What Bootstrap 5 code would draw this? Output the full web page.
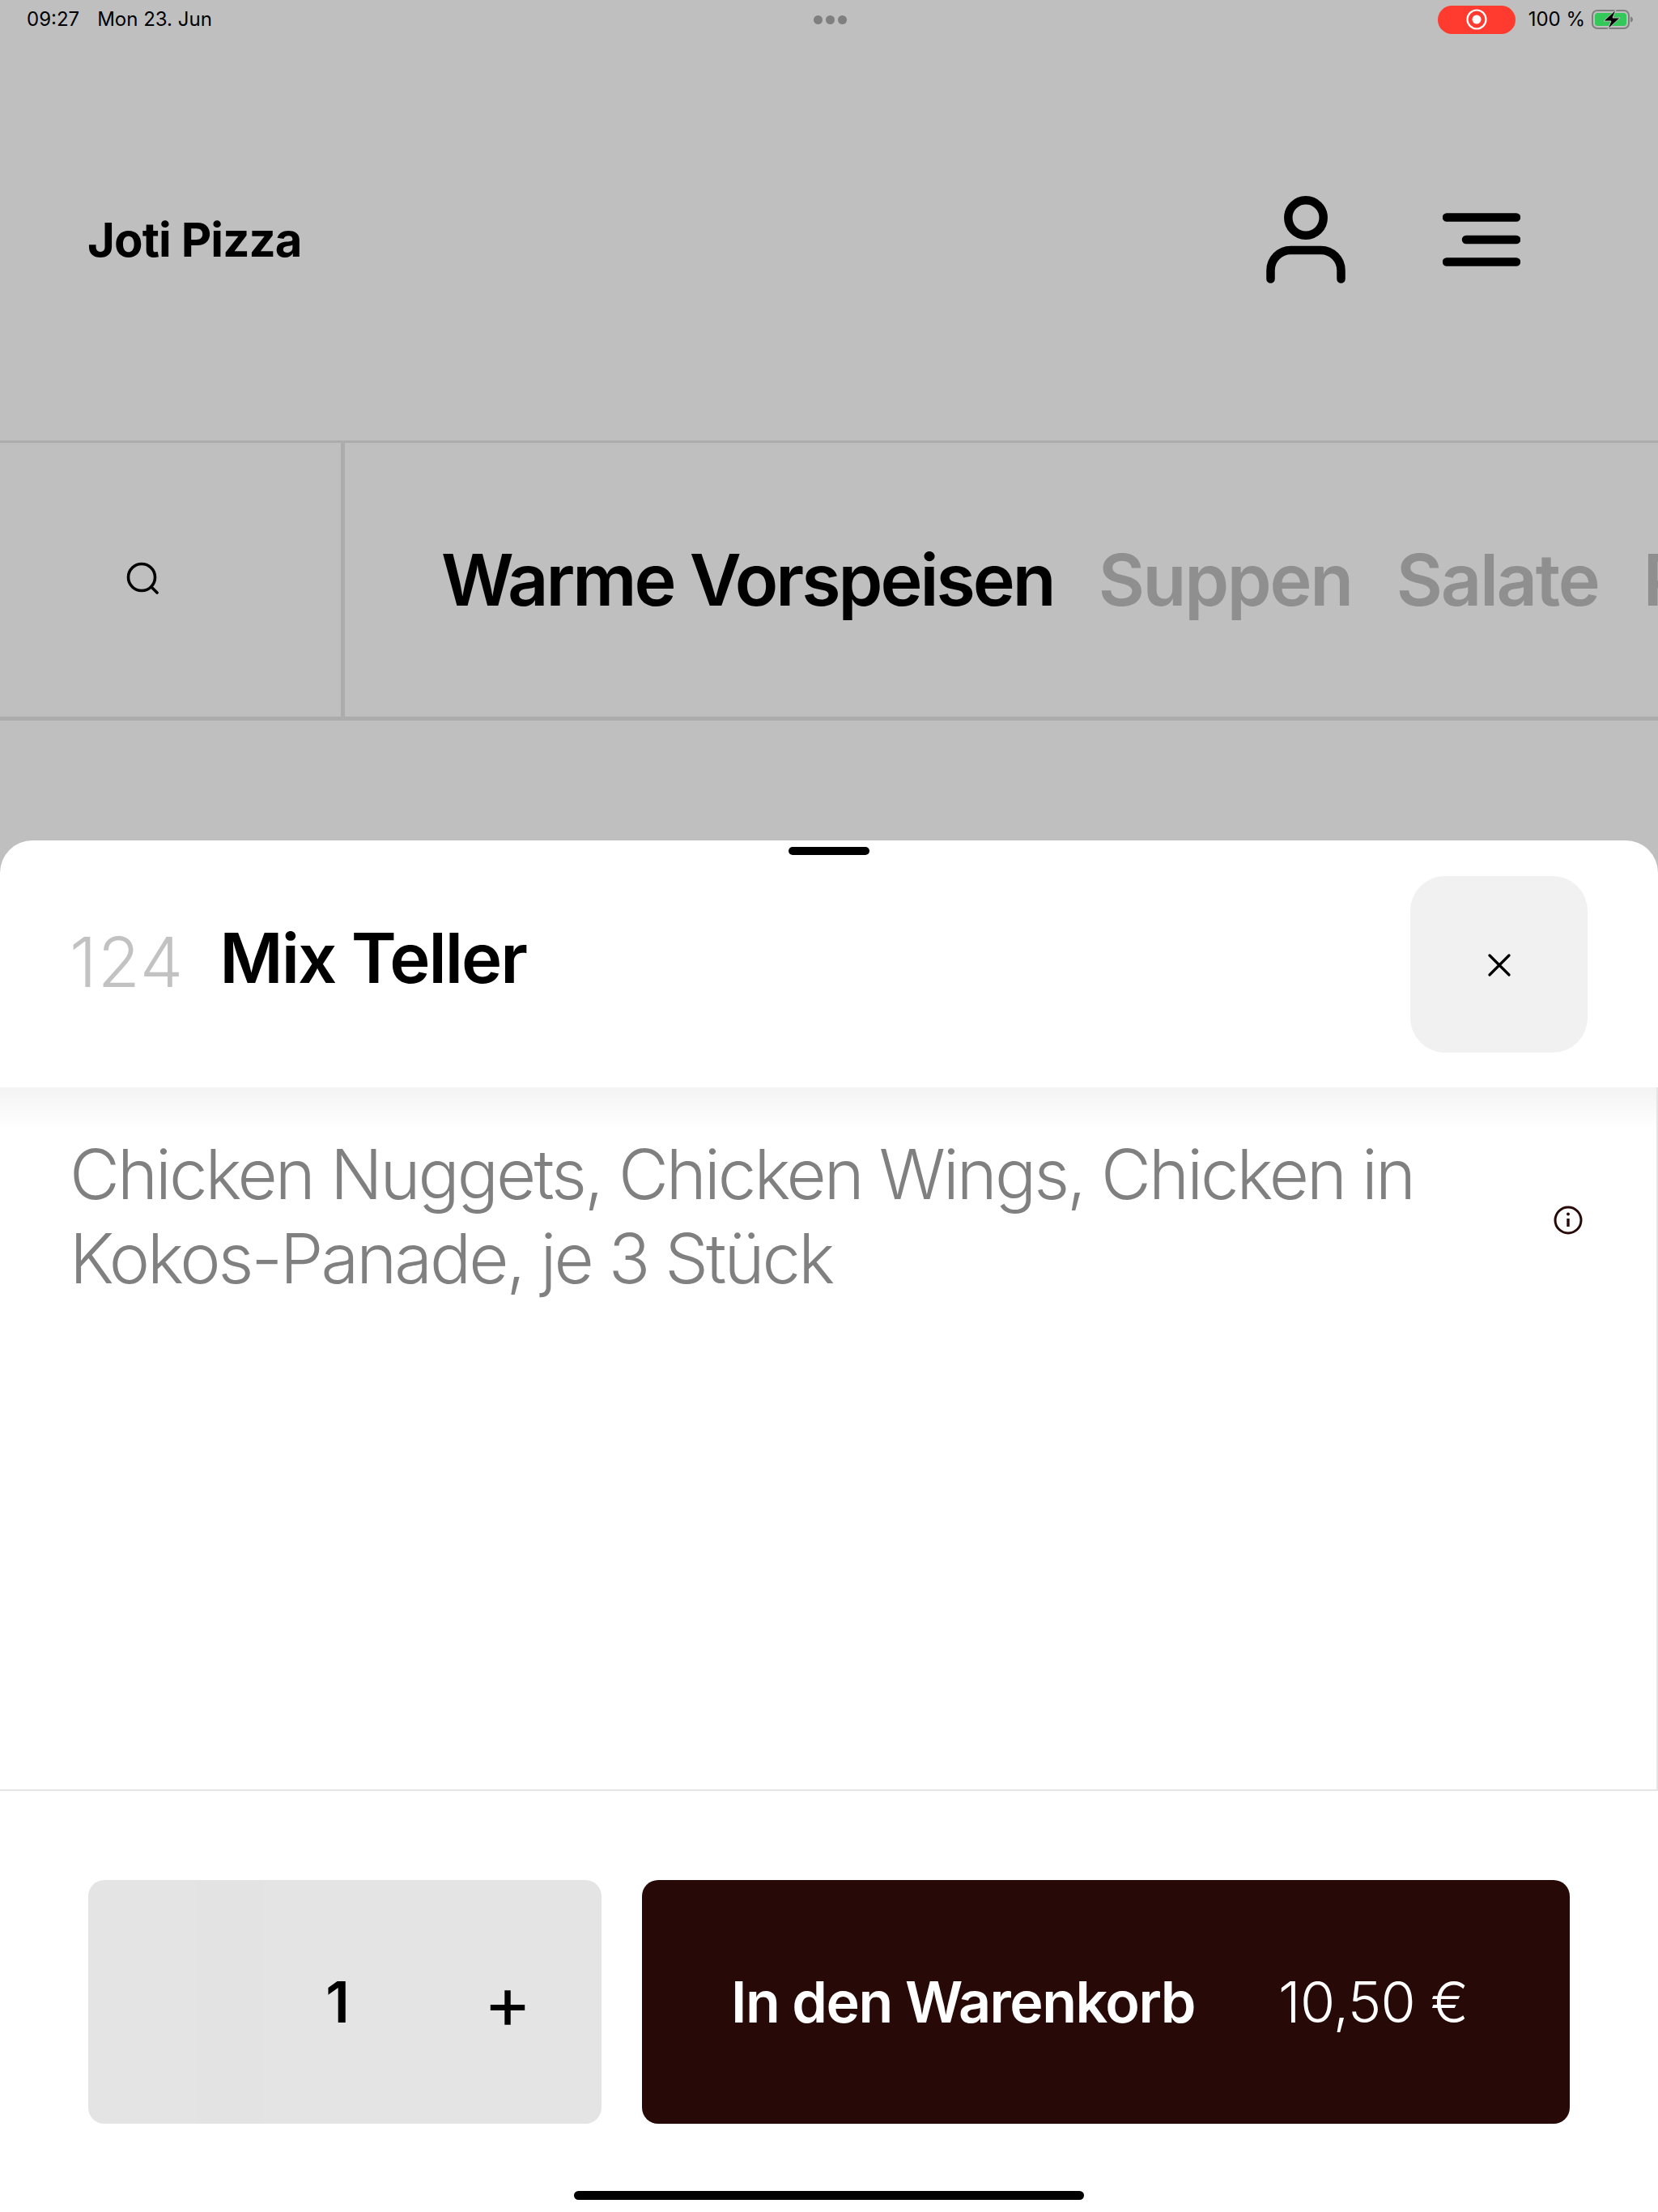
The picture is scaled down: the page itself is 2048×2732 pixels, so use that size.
<!DOCTYPE html>
<html lang="de">
<head>
  <meta charset="UTF-8" />
  <meta name="viewport" content="width=device-width, initial-scale=1" />
  <title>Joti Pizza</title>
  <link href="https://cdn.jsdelivr.net/npm/bootstrap@5.3.0/dist/css/bootstrap.min.css" rel="stylesheet" />
  <style>
    body {
      margin: 0;
      background: #bfbfbf;
      font-family: Inter, "Liberation Sans", sans-serif;
      color: #000;
    }
    .app-frame { width: 2048px; height: 2732px; overflow: hidden; }

    /* status bar */
    .status-bar { height: 48px; padding: 0 30px 0 33px; font-size: 24px; line-height: 1; }
    .status-side { flex: 1 1 0; }
    .status-clock { gap: 22px; }
    .status-dots { gap: 4px; }
    .status-dots i { width: 11px; height: 11px; border-radius: 50%; background: #7f7f7f; display: block; }
    .rec-pill { width: 96px; height: 35px; border-radius: 18px; background: #ff3b30; margin-right: 16px; }

    /* header */
    .top-head { height: 496px; padding: 0 170px 0 108px; }
    .brand-name { font-size: 58px; font-weight: 700; letter-spacing: -.9px; }
    .head-icons { gap: 120px; }

    /* category strip */
    .cat-strip { height: 346px; border-top: 3px solid #acacac; border-bottom: 5px solid #acacac; }
    .cat-search { width: 426px; padding: 0 0 4px 156px; border-right: 5px solid #acacac; }
    .cat-list { min-width: 0; padding-left: 119px; gap: 55px; overflow: hidden; white-space: nowrap; font-size: 88px; font-weight: 600; letter-spacing: -2.3px; color: #8f8f8f; }
    .cat-list .is-active { color: #000; letter-spacing: -3px; }

    /* bottom sheet */
    .sheet { margin-top: 148px; background: #fff; border-radius: 40px 40px 0 0; position: relative; }
    .sheet-handle { position: absolute; top: 8px; left: 974px; width: 100px; height: 10px; border-radius: 5px; background: #000; }
    .sheet-head { height: 305px; padding: 0 87px 0 86px; }
    .dish-no { font-size: 85px; font-weight: 300; color: #c2c2c2; letter-spacing: 1.2px; margin-right: 44px; }
    .dish-name { font-size: 85px; font-weight: 600; letter-spacing: -2px; margin: 0 0 10px; line-height: 1.2; }
    .title-line { margin-bottom: 4px; }
    .close-box { width: 219px; height: 218px; border-radius: 43px; background: #f1f1f1; border: 0; padding: 2px 0 0; }
    .sheet-body {
      height: 867px;
      padding: 56px 91px 0 86px;
      border-right: 2px solid #e5e5e5;
      background: linear-gradient(#f3f3f3, #fff 52px);
    }
    .dish-desc { font-size: 85px; font-weight: 300; line-height: 104px; color: #808080; letter-spacing: -2.95px; margin: 0; }
    .info-mark { margin-top: 90px; }
    .sheet-foot { border-top: 2px solid #e5e5e5; padding: 110px 109px 0; }
    .foot-row { gap: 50px; height: 301px; }
    .qty-box { width: 634px; border-radius: 20px; background: #e4e4e4; font-weight: 600; font-size: 70px; line-height: 1; overflow: hidden; }
    .qty-pad { width: 134px; }
    .qty-minus { width: 82px; background: #e3e3e3; }
    .qty-value { width: 184px; }
    .qty-plus { flex: 1 1 0; font-weight: 400; font-size: 90px; padding-left: 2px; }
    .cart-btn { width: 1146px; border-radius: 20px; background: #270a07; color: #fff; border: 0; padding: 0 0 0 110px; font-size: 70px; font-weight: 600; letter-spacing: -1.5px; }
    .cart-btn:hover { background: #270a07; color: #fff; }
    .cart-price { font-weight: 300; margin-left: 103px; letter-spacing: -.7px; }
    .home-bar { width: 630px; height: 11px; border-radius: 6px; background: #000; margin: 83px auto 0; }
  </style>
</head>
<body>
  <div class="app-frame d-flex flex-column">
    <!-- status bar -->
    <div class="status-bar d-flex align-items-center">
      <div class="status-side status-clock d-flex"><span>09:27</span><span>Mon 23. Jun</span></div>
      <div class="status-dots d-flex"><i></i><i></i><i></i></div>
      <div class="status-side d-flex align-items-center justify-content-end">
        <div class="rec-pill d-flex align-items-center justify-content-center">
          <svg width="26" height="26" viewBox="0 0 26 26"><circle cx="13" cy="13" r="11.5" fill="none" stroke="#fff" stroke-width="2.2"/><circle cx="13" cy="13" r="5.5" fill="#fff"/></svg>
        </div>
        <span>100 %</span>
        <svg class="ms-2" width="52" height="24" viewBox="0 0 52 24">
          <rect x="1" y="1" width="45" height="22" rx="6" fill="none" stroke="#7f7f7f" stroke-width="2"/>
          <rect x="4" y="4" width="39" height="16" rx="3.5" fill="#34c759"/>
          <path d="M48 8.5c2 .5 3 2 3 3.5s-1 3-3 3.500z" fill="#7f7f7f"/>
          <path d="M30 0 15 14h9l-4 10 15-14h-9z" fill="#000" stroke="#bfbfbf" stroke-width="1"/>
        </svg>
      </div>
    </div>

    <!-- header -->
    <header class="top-head d-flex align-items-center justify-content-between">
      <div class="brand-name">Joti Pizza</div>
      <div class="head-icons d-flex align-items-center">
        <svg width="98" height="108" viewBox="0 0 98 108" fill="none" stroke="#000" stroke-width="10.500" stroke-linecap="round">
          <circle cx="49" cy="27" r="21.700"/>
          <path d="M5.500 102.500V92a25 25 0 0 1 25-25h37a25 25 0 0 1 25 25v10.500"/>
        </svg>
        <svg width="96" height="66" viewBox="0 0 96 66" fill="none" stroke="#000" stroke-width="10.500" stroke-linecap="round">
          <path d="M5 5.500h86M29 33h62M5 60.500h86"/>
        </svg>
      </div>
    </header>

    <!-- categories -->
    <div class="cat-strip d-flex">
      <div class="cat-search flex-shrink-0 d-flex align-items-center">
        <svg width="40" height="40" viewBox="0 0 40 40" fill="none" stroke="#000" stroke-width="3.600" stroke-linecap="round">
          <circle cx="19" cy="19" r="16.500"/>
          <path d="M31 31l7 7"/>
        </svg>
      </div>
      <div class="cat-list flex-grow-1 d-flex align-items-center">
        <span class="is-active">Warme Vorspeisen</span>
        <span>Suppen</span>
        <span>Salate</span>
        <span>Pizza</span>
      </div>
    </div>

    <!-- bottom sheet -->
    <section class="sheet flex-grow-1 d-flex flex-column">
      <div class="sheet-handle"></div>
      <div class="sheet-head d-flex align-items-center justify-content-between">
        <div class="title-line d-flex align-items-center">
          <span class="dish-no">124</span>
          <h1 class="dish-name">Mix Teller</h1>
        </div>
        <button type="button" class="close-box btn d-flex align-items-center justify-content-center" aria-label="Schließen">
          <svg width="28" height="28" viewBox="0 0 28 28" fill="none" stroke="#000" stroke-width="3.200" stroke-linecap="round"><path d="M2 2l24 24M26 2 2 26"/></svg>
        </button>
      </div>
      <div class="sheet-body d-flex justify-content-between align-items-start">
        <p class="dish-desc">Chicken Nuggets, Chicken Wings, Chicken in<br>Kokos-Panade, je 3 Stück</p>
        <svg class="info-mark" width="36" height="36" viewBox="0 0 36 36" fill="none" stroke="#270a07">
          <circle cx="18" cy="18" r="16" stroke-width="3"/>
          <path d="M18 16v10" stroke-width="3.400"/>
          <circle cx="18" cy="10.500" r="2" fill="#270a07" stroke="none"/>
        </svg>
      </div>
      <div class="sheet-foot flex-grow-1">
        <div class="foot-row d-flex">
          <div class="qty-box d-flex">
            <div class="qty-pad"></div>
            <div class="qty-minus"></div>
            <div class="qty-value d-flex align-items-center justify-content-center">1</div>
            <div class="qty-plus d-flex align-items-center justify-content-center">+</div>
          </div>
          <button type="button" class="cart-btn btn d-flex align-items-center">
            <span>In den Warenkorb</span>
            <span class="cart-price">10,50 €</span>
          </button>
        </div>
        <div class="home-bar"></div>
      </div>
    </section>
  </div>
  <script src="https://cdn.jsdelivr.net/npm/bootstrap@5.3.0/dist/js/bootstrap.bundle.min.js"></script>
</body>
</html>
